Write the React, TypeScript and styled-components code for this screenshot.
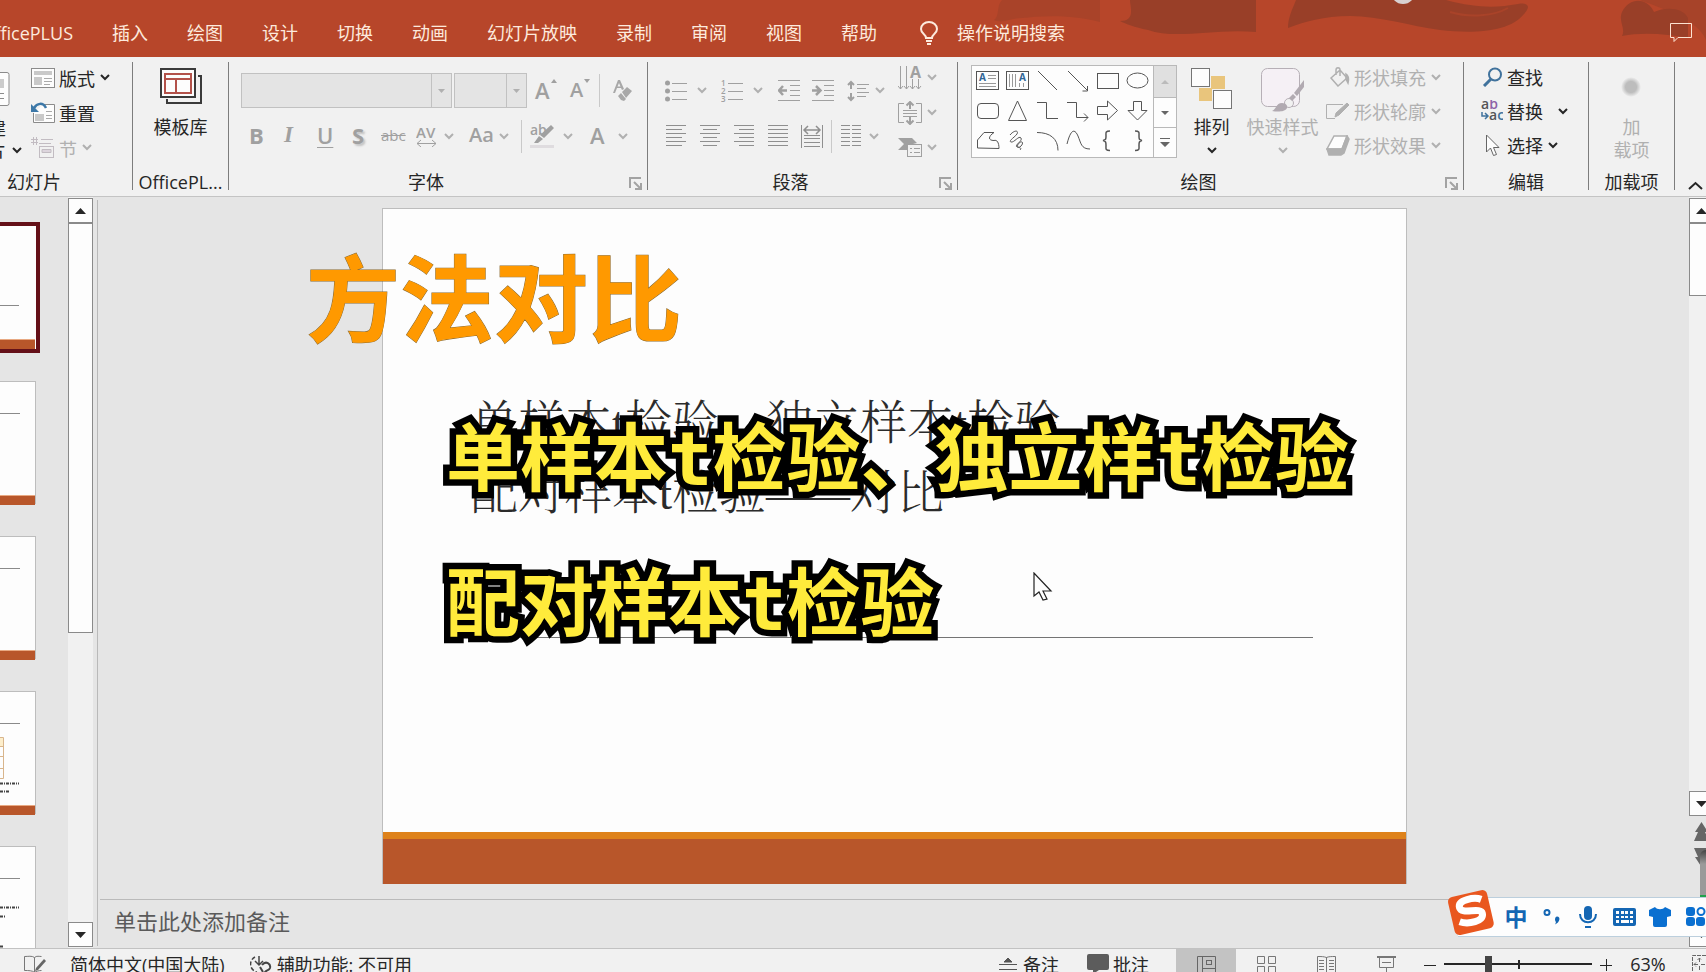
import React from "react";
import styled, { createGlobalStyle, css } from "styled-components";

const GlobalStyle = createGlobalStyle`
  *, *::before, *::after { box-sizing: border-box; }
  html, body, #root { height: 100%; margin: 0; }
  body {
    overflow: hidden;
    background: #e5e5e5;
    font-family: "Open Sans", "Noto Sans CJK SC", sans-serif;
    font-size: 18px;
    color: #262626;
  }
  button, select, textarea, input { font: inherit; color: inherit; margin: 0; }
  button { border: 0; padding: 0; background: none; }
`;

const ink = "#262626";
const faded = "#b0b0b0";
const grey = "#a0a0a0";

const Window = styled.div`
  height: 100vh;
  display: grid;
  grid-template-rows: 57px 140px minmax(0, 1fr) 24px;
  grid-template-columns: minmax(0, 1fr);
  position: relative;
  overflow: hidden;
`;

/* ---------- title bar ---------- */
const TitleBar = styled.header`
  position: relative;
  display: flex;
  align-items: center;
  padding-top: 9px;
  background: #b7462a;
  color: #fdeadd;
  overflow: hidden;
`;
const Waves = styled.svg`
  position: absolute;
  top: 0;
  right: 0;
`;
const Tabs = styled.nav`
  position: relative;
  display: flex;
  align-items: center;
  gap: 39px;
  white-space: nowrap;
`;
const Tab = styled.button`
  line-height: 24px;
`;
const CutTab = styled(Tab)`
  width: 73px;
  display: flex;
  justify-content: flex-end;
  overflow: hidden;
`;
const TellMe = styled(Tab)`
  display: flex;
  align-items: center;
  gap: 19px;
  margin-left: 4px;
`;
const CommentButton = styled.button`
  position: relative;
  margin-left: auto;
  padding-right: 14px;
  display: flex;
`;

/* ---------- ribbon ---------- */
const Ribbon = styled.section`
  display: flex;
  padding: 5px 0 6px;
  background: #f1f1f1;
  border-bottom: 1px solid #c4c4c4;
  overflow: hidden;
`;
const Group = styled.div<{ $w: number }>`
  flex: none;
  width: ${(p) => p.$w}px;
  display: flex;
  flex-direction: column;
  border-right: 1px solid #7d7d7d;
`;
const GroupBody = styled.div`
  flex: 1;
  display: flex;
  min-height: 0;
`;
const GroupFoot = styled.div<{ $start?: boolean }>`
  height: 17px;
  display: flex;
  align-items: center;
  line-height: 18px;
  white-space: nowrap;
  padding-left: ${(p) => (p.$start ? 7 : 0)}px;
`;
const GroupLabel = styled.span<{ $start?: boolean }>`
  flex: 1;
  text-align: ${(p) => (p.$start ? "left" : "center")};
`;
const Launcher = styled.button`
  width: 24px;
  height: 17px;
  display: flex;
  align-items: flex-end;
  justify-content: center;
`;
const Stack = styled.div<{ $row: number; $left?: number }>`
  display: grid;
  grid-auto-rows: ${(p) => p.$row}px;
  align-content: start;
  margin-top: -2px;
  padding-left: ${(p) => p.$left ?? 0}px;
`;
const Item = styled.button<{ $off?: boolean; $gap?: number }>`
  display: flex;
  align-items: center;
  justify-content: flex-start;
  gap: ${(p) => p.$gap ?? 4}px;
  white-space: nowrap;
  color: ${(p) => (p.$off ? faded : ink)};
`;
const ItemText = styled.span<{ $after?: number }>`
  margin-right: ${(p) => p.$after ?? 0}px;
`;
const BigButton = styled.button<{ $off?: boolean; $w: number }>`
  width: ${(p) => p.$w}px;
  display: flex;
  flex-direction: column;
  align-items: center;
  padding-top: 6px;
  line-height: 23px;
  white-space: nowrap;
  color: ${(p) => (p.$off ? faded : ink)};
`;
const BigIcon = styled.span`
  height: 48px;
  display: flex;
  align-items: flex-start;
`;
const BigChevron = styled.span`
  height: 22px;
  display: flex;
  align-items: center;
`;
const CutNew = styled.button`
  width: 31px;
  display: flex;
  flex-direction: column;
  align-items: flex-start;
  padding-top: 10px;
  line-height: 22px;
  overflow: hidden;
`;
const CutIcon = styled.span`
  height: 45px;
`;
const CutText = styled.span`
  display: flex;
  align-items: center;
  gap: 6px;
`;
const CutGlyph = styled.span`
  width: 6px;
  display: flex;
  justify-content: flex-end;
  overflow: hidden;
`;

const Rows = styled.div<{ $w?: number }>`
  display: grid;
  grid-template-rows: 35px 34px;
  row-gap: 11px;
  padding-top: 11px;
  align-content: start;
  width: ${(p) => (p.$w ? p.$w + "px" : "auto")};
`;
const Row = styled.div<{ $left: number }>`
  display: flex;
  align-items: center;
  padding-left: ${(p) => p.$left}px;
`;
const Tool = styled.button<{ $w: number; $gap?: number }>`
  flex: none;
  width: ${(p) => p.$w}px;
  height: 32px;
  display: flex;
  align-items: center;
  gap: ${(p) => p.$gap ?? 7}px;
  color: ${grey};
`;
const Rule = styled.span<{ $after: number }>`
  width: 1px;
  height: 33px;
  background: #c9c9c9;
  margin-right: ${(p) => p.$after}px;
`;
const Combo = styled.span<{ $w: number; $after: number }>`
  flex: none;
  display: flex;
  width: ${(p) => p.$w}px;
  height: 35px;
  margin-right: ${(p) => p.$after}px;
  background: #e4e4e4;
  border: 1px solid #c1c1c1;
`;
const ComboSelect = styled.select`
  flex: 1;
  min-width: 0;
  appearance: none;
  border: 0;
  background: none;
`;
const ComboArrow = styled.span`
  width: 20px;
  display: flex;
  align-items: center;
  justify-content: center;
  border-left: 1px solid #c1c1c1;
`;
const Letter = styled.span<{ $kind: "bold" | "italic" | "under" | "shadow" | "strike" | "case" | "big" | "small" }>`
  line-height: 26px;
  font-size: 22px;
  padding-bottom: 2px;
  ${(p) => p.$kind === "bold" && css`font-weight: 700;`}
  ${(p) => p.$kind === "italic" && css`font: italic 700 23px/26px "Liberation Serif", serif;`}
  ${(p) => p.$kind === "under" && css`font-weight: 600; text-decoration: underline; text-decoration-thickness: 1px; text-underline-offset: 3px;`}
  ${(p) => p.$kind === "shadow" && css`font-weight: 700; text-shadow: 2px 2px 2px #c4c4c4;`}
  ${(p) => p.$kind === "strike" && css`font-size: 15px; text-decoration: line-through;`}
  ${(p) => p.$kind === "case" && css`font-size: 20px; font-weight: 600;`}
  ${(p) => p.$kind === "big" && css`font-weight: 600;`}
  ${(p) => p.$kind === "small" && css`font-size: 20px; font-weight: 600;`}
`;
const SizeMark = styled.span`
  align-self: flex-start;
  display: flex;
  padding-top: 4px;
  margin-left: -6px;
`;

const Gallery = styled.div`
  display: flex;
  width: 206px;
  height: 93px;
  margin: 3px 0 0 13px;
  border: 1px solid #b9b9b9;
  background: #fdfdfd;
`;
const Shapes = styled.div`
  flex: 1;
  display: grid;
  grid-template-columns: repeat(6, 30px);
  grid-template-rows: repeat(3, 30px);
  padding-left: 1px;
`;
const ShapeButton = styled.button`
  display: flex;
  align-items: center;
  justify-content: center;
`;
const GalleryNav = styled.div`
  width: 23px;
  display: grid;
  grid-template-rows: 31px 30px 30px;
  border-left: 1px solid #b9b9b9;
`;
const GalleryArrow = styled.button<{ $off?: boolean }>`
  display: flex;
  align-items: center;
  justify-content: center;
  background: ${(p) => (p.$off ? "#e0e0e0" : "#fdfdfd")};
  & + & { border-top: 1px solid #b9b9b9; }
`;
const Collapse = styled.button`
  flex: 1;
  display: flex;
  align-items: flex-end;
  justify-content: center;
  padding-left: 10px;
`;

/* ---------- workspace ---------- */
const Workspace = styled.main`
  display: grid;
  grid-template-columns: 68px 25px 5px minmax(0, 1fr);
  min-height: 0;
`;
const Thumbs = styled.nav`
  display: flex;
  flex-direction: column;
  align-items: flex-start;
  gap: 32px;
  padding-top: 29px;
  overflow: hidden;
`;
const Thumb = styled.button<{ $active?: boolean }>`
  flex: none;
  width: 36px;
  height: 123px;
  display: flex;
  background: #fdfdfd;
  ${(p) =>
    p.$active
      ? css`outline: 4px solid #641018;`
      : css`border: solid #bdbdbd; border-width: 1px 1px 0 0;`}
`;
const Bar = styled.div`
  display: flex;
  flex-direction: column;
  min-height: 0;
  padding: 1px 0;
  background: #f1f1f1;
  overflow: hidden;
`;
const BarButton = styled.button`
  flex: none;
  width: 25px;
  height: 25px;
  display: flex;
  align-items: center;
  justify-content: center;
  background: #fdfdfd;
  border: 1px solid #8a8a8a;
`;
const BarThumb = styled.div<{ $part: number }>`
  flex: ${(p) => p.$part} 0 0;
  width: 25px;
  background: #fdfdfd;
  border: 1px solid #8a8a8a;
`;
const BarSpace = styled.div<{ $part: number }>`
  flex: ${(p) => p.$part} 0 0;
`;
const Jump = styled.button`
  flex: none;
  width: 25px;
  height: 26px;
  display: flex;
  align-items: center;
  justify-content: center;
`;
const BarTail = styled.div`
  display: flex;
  flex-direction: column;
  padding: 2px 0 28px;
  background: #e5e5e5;
`;
const Splitter = styled.div`
  border-left: 1px solid #b9b9b9;
  margin: 3px 0 2px 4px;
`;
const Editor = styled.section`
  display: grid;
  grid-template-rows: minmax(0, 1fr) 49px;
  min-width: 0;
  min-height: 0;
`;
const StageRow = styled.div`
  display: grid;
  grid-template-columns: minmax(0, 1fr) 17px;
  min-height: 0;
`;
const Stage = styled.div`
  display: flex;
  justify-content: center;
  padding: 11px 0 15px 2px;
  min-height: 0;
`;
const Slide = styled.article`
  position: relative;
  height: 100%;
  aspect-ratio: 1025 / 676;
  display: flex;
  flex-direction: column;
  background: #fdfdfd;
  border: solid #bdbdbd;
  border-width: 1px 1px 0;
`;
const SlideTitle = styled.h1`
  margin: 0;
  padding: 179px 0 0 88px;
  font-family: "Liberation Serif", "Noto Serif CJK SC", "Noto Sans CJK SC", serif;
  font-size: 47px;
  font-weight: 300;
  line-height: 70px;
  color: #2b2b2b;
  white-space: nowrap;
`;
const Dash = styled.span`
  font-size: 42px;
`;
const SlideRule = styled.hr`
  width: auto;
  height: 1px;
  margin: 107px 93px 0 101px;
  border: 0;
  background: #747474;
`;
const Band = styled.div`
  margin-top: auto;
  height: 52px;
  background: #b8562a;
  border-top: 7px solid #de821b;
`;
const Headline = styled.p`
  position: absolute;
  left: -77px;
  top: 38px;
  margin: 0;
  font: 700 94px/94px "Noto Sans CJK SC", sans-serif;
  color: #ff9900;
  -webkit-text-stroke: 1px #8a6a30;
  paint-order: stroke fill;
  white-space: nowrap;
`;
const Caption = styled.p`
  position: absolute;
  left: 63px;
  top: 178px;
  margin: 0;
  font: 700 74px/145px "DejaVu Sans Mono", "Noto Sans CJK SC", sans-serif;
  color: #ffeb3b;
  -webkit-text-stroke: 13px #000;
  paint-order: stroke fill;
  white-space: nowrap;
`;
const Pointer = styled.svg`
  position: absolute;
  left: 650px;
  top: 363px;
`;
const Notes = styled.label`
  display: grid;
  grid-template-columns: minmax(0, 1fr) 17px;
  margin-left: 2px;
  border-top: 1px solid #bababa;
`;
const NotesBox = styled.textarea`
  height: 46px;
  padding: 5px 0 0 14px;
  border: 0;
  outline: 0;
  resize: none;
  background: none;
  font-size: 22px;
  line-height: 32px;
  &::placeholder { color: #5a5a5a; opacity: 1; }
`;
const NotesBar = styled(Bar)`
  justify-content: flex-end;
`;

/* ---------- status bar ---------- */
const Status = styled.footer`
  display: flex;
  height: 24px;
  background: #f1f1f1;
  border-top: 1px solid #c2c2c2;
  overflow: hidden;
  white-space: nowrap;
`;
const StatusItem = styled.button<{ $gap: number; $left: number }>`
  height: 30px;
  flex: none;
  display: flex;
  align-items: center;
  gap: ${(p) => p.$gap}px;
  padding-left: ${(p) => p.$left}px;
`;
const StatusRight = styled.div`
  display: flex;
  margin-left: auto;
`;
const Views = styled.div`
  display: flex;
  margin-left: 27px;
`;
const View = styled.button<{ $on?: boolean }>`
  width: 60px;
  height: 32px;
  display: flex;
  align-items: center;
  justify-content: center;
  background: ${(p) => (p.$on ? "#c3c3c3" : "transparent")};
`;
const Zoom = styled.div`
  height: 30px;
  display: flex;
  align-items: center;
  padding-left: 8px;
`;
const ZoomTrack = styled.label`
  position: relative;
  display: flex;
  margin: 0 8px;
  &::after {
    content: "";
    position: absolute;
    left: 50%;
    top: 4px;
    width: 2px;
    height: 9px;
    background: #262626;
  }
`;
const Range = styled.input`
  appearance: none;
  width: 148px;
  height: 17px;
  background: linear-gradient(#262626, #262626) center / 100% 2px no-repeat;
  &::-webkit-slider-thumb {
    appearance: none;
    width: 7px;
    height: 17px;
    background: #444;
  }
`;
const Percent = styled.button`
  width: 62px;
  margin-left: 5px;
  text-align: center;
`;
const FitButton = styled.button`
  width: 27px;
  display: flex;
  justify-content: flex-end;
  overflow: hidden;
`;

/* ---------- input method bar ---------- */
const ImeBar = styled.aside`
  position: absolute;
  right: 0;
  bottom: 35px;
  width: 248px;
  height: 40px;
  display: flex;
  align-items: center;
  padding-left: 40px;
  background: #fdfdfd;
  border: solid #bccfdd;
  border-width: 1px 0;
  color: #1466b3;
`;
const ImeLogo = styled.svg`
  position: absolute;
  left: -12px;
  top: -9px;
`;
const ImeKey = styled.button`
  flex: none;
  width: 36px;
  height: 30px;
  display: flex;
  align-items: center;
  justify-content: center;
  font-size: 23px;
  font-weight: 700;
  line-height: 28px;
`;
const EdgeWidget = styled.div`
  position: absolute;
  right: 0;
  bottom: 74px;
  width: 6px;
  height: 48px;
  border-radius: 6px 0 0 0;
  background: linear-gradient(#444, #9a9a9a 14px);
  border-bottom: 3px solid #22a24c;
`;

/* ---------- small drawings ---------- */
const Picture = styled.svg`
  flex: none;
`;
type DrawProps = { w: number; h: number; s?: string; sw?: number; f?: string; children: React.ReactNode };
const Draw = ({ w, h, s = "none", sw = 1, f = "none", children }: DrawProps) => (
  <Picture width={w} height={h} viewBox={`0 0 ${w} ${h}`} stroke={s} strokeWidth={sw} fill={f} aria-hidden="true">
    {children}
  </Picture>
);
const Chevron = ({ c = ink }: { c?: string }) => (
  <Draw w={10} h={7} s={c} sw={2}><path d="M1 1l4 4 4-4" /></Draw>
);
const Tri = ({ c = ink, up, w = 11 }: { c?: string; up?: boolean; w?: number }) => (
  <Draw w={w} h={w > 8 ? 6 : 4} f={c}>
    {w > 8
      ? <path d={up ? `M0 6L${w / 2} 0L${w} 6z` : `M0 0L${w / 2} 6L${w} 0z`} />
      : <path d={up ? `M0 4L${w / 2} 0L${w} 4z` : `M0 0L${w / 2} 4L${w} 0z`} />}
  </Draw>
);
const lines = (rows: [number, number, number][]) => rows.map(([y, a, b], i) => <path key={i} d={`M${a} ${y}.5H${b}`} />);

const LayoutIcon = () => (
  <Draw w={24} h={20} s="#8b8b8b">
    <rect x=".5" y=".5" width="23" height="19" fill="#fdfdfd" />
    <path d="M3 3h18v4H3zM3 9h8v8H3z" fill="#c9c9c9" stroke="none" />
    <path d="M13 10.500h8M13 13.500h8M13 16.500h6" stroke="#aaa" />
  </Draw>
);
const ResetIcon = () => (
  <Draw w={24} h={21} s="#8b8b8b">
    <path d="M12 2.500h11.500v18H2.500V11" fill="#fdfdfd" />
    <path d="M4 12h9v7H4z" fill="#c9c9c9" stroke="none" />
    <path d="M15 9.500h6M15 13.500h6M15 16.500h6" stroke="#aaa" />
    <path d="M15 6C12 0 6 1 3 6" stroke="#3d78a8" strokeWidth="2.500" />
    <path d="M0 2v8h8z" fill="#3d78a8" stroke="none" />
  </Draw>
);
const SectionIcon = () => (
  <Draw w={24} h={22} s="#c2bcc2">
    <path d="M0 2.500h7M0 5.500h7M2.500 0v8M5.500 0v8M10 2.500h12M8 6.500h12" />
    <rect x="8.500" y="9.500" width="14" height="11" />
    <path d="M11 12.500h9v3h-9z" fill="#ddd5dd" />
  </Draw>
);
const TemplateIcon = () => (
  <Draw w={42} h={37} s="#3a3a3a" sw={2}>
    <path d="M38 8h3v27H7v-4" />
    <rect x="1" y="1" width="34" height="28" fill="#fdfdfd" />
    <path d="M5 6h26v19H5zM5 11h26M16 11v14" stroke="#b3524a" />
  </Draw>
);
const EraserIcon = () => (
  <Draw w={20} h={24} f="#a8a8a8">
    <path d="M0 14L5 1h2l4 9-2 1-1-2H4l-2 5zM4.500 7.500h3L6 4z" fillRule="evenodd" />
    <path d="M9 13l5-5 5 4-6 7zM8 14l5 6-2 2-3-1-3-4z" />
  </Draw>
);
const SpacingIcon = () => (
  <Draw w={21} h={22} s={grey}>
    <text x="0" y="13" fontSize="15" fontWeight="600" fill={grey} stroke="none">AV</text>
    <path d="M1 18.500h19M5 15l-4 3.500 4 3.500M16 15l4 3.500-4 3.500" />
  </Draw>
);
const HighlightIcon = () => (
  <Draw w={24} h={24} f={grey}>
    <text x="0" y="11" fontSize="14" fontWeight="600">ab</text>
    <path d="M21 1l3 3-10 10-4-3zM9 12l4 3-5 4H4z" />
    <path d="M0 21h24v3H0z" fill="#dfdcdf" />
  </Draw>
);
const BulletsIcon = () => (
  <Draw w={22} h={22} s={grey}>
    {[3, 11, 19].map((y) => <circle key={y} cx="2.500" cy={y} r="2.500" fill={grey} stroke="none" />)}
    <path d="M7 3.500h15M7 11.500h15M7 19.500h15" />
  </Draw>
);
const NumbersIcon = () => (
  <Draw w={22} h={24} s={grey}>
    {[1, 2, 3].map((n) => <text key={n} x="0" y={n * 8 - 1} fontSize="8" fontWeight="600" fill={grey} stroke="none">{n}</text>)}
    <path d="M7 4.500h15M7 12.500h15M7 20.500h15" />
  </Draw>
);
const IndentIcon = ({ flip }: { flip?: boolean }) => (
  <Draw w={22} h={22} s={grey}>
    <path d="M0 .5h22M12 5.500h10M12 10.500h10M12 15.500h10M0 20.500h22" />
    <path d={flip ? "M8 10.500H0M4 6l4.500 4.500L4 15" : "M1 10.500h8M5 6L1 10.500 5 15"} strokeWidth="2.500" />
  </Draw>
);
const LineGapIcon = () => (
  <Draw w={22} h={22} s={grey}>
    <path d="M10 4.500h12M10 8.500h9M10 12.500h12M10 16.500h9" />
    <path d="M4 2v7M1 5l3-3 3 3M4 13v7M1 17l3 3 3-3" strokeWidth="2" />
  </Draw>
);
const AlignIcon = ({ kind }: { kind: "l" | "c" | "r" | "j" }) => {
  const short: [number, number] = kind === "l" ? [0, 16] : kind === "c" ? [3, 17] : kind === "r" ? [5, 20] : [0, 20];
  return (
    <Draw w={21} h={22} s="#8f8f8f">
      {lines([[0, 0, 20], [4, ...short], [8, 0, 20], [12, ...short], [16, 0, 20], [20, ...short]])}
    </Draw>
  );
};
const DistributeIcon = () => (
  <Draw w={22} h={23} s="#8f8f8f">
    <path d="M.5 0v23M21.500 0v23M3 10.500h16M3 13.500h16M3 17.500h16M3 21.500h16" />
    <path d="M3 5h16M7 1L3 5l4 4M15 1l4 4-4 4" strokeWidth="1.500" />
  </Draw>
);
const ColumnsIcon = () => (
  <Draw w={21} h={22} s="#8f8f8f">
    {[0, 4, 8, 12, 16, 20].map((y) => <path key={y} d={`M0 ${y}.5h9M11 ${y}.5h9`} />)}
  </Draw>
);
const DirectionIcon = () => (
  <Draw w={24} h={24} s={grey}>
    <path d="M2.500 0v23M8.500 0v23M14.500 13v10M20.500 13v10" />
    <path d="M0 20l2.500 3L5 20M6 20l2.500 3 2.500-3M12 20l2.500 3 2.500-3M18 20l2.500 3 2.500-3" />
    <text x="12" y="12" fontSize="16" fontWeight="700" fill={grey} stroke="none">A</text>
  </Draw>
);
const VAlignIcon = () => (
  <Draw w={24} h={24} s={grey}>
    <path d="M6 2.500H.5v19H6M18 2.500h5.500v19H18M5 9.500h14M5 12.500h14M5 15.500h14" />
    <path d="M12 1v7M8.500 4.500L12 1l3.500 3.500M12 16v7M8.500 19.500L12 23l3.500-3.500" strokeWidth="2" />
  </Draw>
);
const SmartArtIcon = () => (
  <Draw w={24} h={19} s={grey}>
    <path d="M0 0h14l5 5-4 1H9v6H0l6-6z" fill={grey} stroke="none" />
    <rect x="9.500" y="6.500" width="14" height="12" fill="#f1f1f1" />
    <path d="M12 10.500h2M16 10.500h6M12 14.500h2M16 14.500h6" />
  </Draw>
);
const LaunchIcon = () => (
  <Draw w={13} h={13} s="#a3a3a3" sw={2}>
    <path d="M1 11V1h11M5 5l6 6M12 6v6H6" />
  </Draw>
);

const galleryShapes: [string, React.ReactNode][] = [
  ["文本框", <><rect x=".5" y="1.500" width="22" height="18" /><path d="M12 5.500h8M12 8.500h8M3 13.500h17M3 16.500h17" stroke="#999" /><text x="3" y="11" fontSize="10" fontWeight="700" fill="#2f6697" stroke="none">A</text></>],
  ["竖排文本框", <><rect x=".5" y="1.500" width="22" height="18" /><path d="M3.500 4v13M6.500 4v13M9.500 4v13M13.500 13v4M17.500 13v4" stroke="#999" /><text x="13" y="11" fontSize="10" fontWeight="700" fill="#2f6697" stroke="none">A</text></>],
  ["直线", <path d="M2 1l19 19" />],
  ["箭头", <path d="M2 1l20 20M21.500 16v5h-5" />],
  ["矩形", <rect x="1.500" y="3.500" width="21" height="15" />],
  ["椭圆", <ellipse cx="11.500" cy="10.500" rx="10.500" ry="7.500" />],
  ["圆角矩形", <rect x="1.500" y="3.500" width="21" height="15" rx="3.500" />],
  ["三角形", <path d="M11.500 1l9 19.500h-18z" />],
  ["肘形连接符", <path d="M1 2.500h9.500v16H22" />],
  ["肘形箭头", <path d="M1 2.500h9.500v15H22M18 13.500l4 4-4 4" />],
  ["右箭头", <path d="M1.500 6.500h10V1l10 9.500-10 9.500v-5.500h-10z" />],
  ["下箭头", <path d="M7.500 1.500h8v9h5.500L11.500 20 2 10.500h5.500z" />],
  ["任意多边形", <path d="M1.500 18V10L8 2.500h10c-6 4-6 8 0 8 3-1 5 2 5 8z" />],
  ["曲线", <path d="M4 5c4-5 9-5 7-1-2 3-9 7-6 8s8-7 10-4-7 7-4 9 7-4 5-5-6 4-4 5 4 1 2 3" />],
  ["弧形", <path d="M1 2.500c13 0 21 6 21 18" />],
  ["自由曲线", <path d="M1 14C5-2 9-1 12 6s3 13 12 13" />],
  ["左大括号", <path d="M14 1c-5 0-4 2-4 5 0 3 0 4-3 4.500 3 .5 3 2 3 5 0 3-1 5 4 5" strokeWidth="1.500" />],
  ["右大括号", <path d="M9 1c5 0 4 2 4 5 0 3 0 4 3 4.500-3 .5-3 2-3 5 0 3 1 5-4 5" strokeWidth="1.500" />],
];

const ArrangeIcon = () => (
  <Draw w={41} h={41} s="#757575">
    <path d="M20 8h14v13H20zM8 20h13v13H8z" fill="#e9c57c" stroke="none" />
    <rect x=".5" y=".5" width="18" height="18" fill="#fdfdfd" />
    <rect x="22.500" y="22.500" width="18" height="18" fill="#fdfdfd" />
  </Draw>
);
const StylesIcon = () => (
  <Draw w={44} h={44} s="#b6afb6">
    <rect x=".5" y=".5" width="38" height="38" rx="6" fill="#f5f0f5" />
    <circle cx="28" cy="35" r="4.500" fill="#f1f1f1" />
    <path d="M11 43c4-1 4-8 10-8 4 0 6 3 5 5-2 4-9 4-15 3zM28 30l4-4 3 3-4 4zM33 25l10-13v7l-7 9z" fill="#b1aab1" stroke="none" />
  </Draw>
);
const FillIcon = () => (
  <Draw w={24} h={20} s={faded} sw={1.5}>
    <path d="M5 11l9-8 7 8-9 8zM10 8V3c0-3 4-3 4 0v6" /><path d="M20 7c3 2 3 5 2 9l-2-4z" fill={faded} />
  </Draw>
);
const OutlineIcon = () => (
  <Draw w={24} h={18} s={faded}>
    <path d="M17 2.500H.5v14H9" /><path d="M9 15l1-4L21 1l2 2-10 10z" fill={faded} />
  </Draw>
);
const EffectIcon = () => (
  <Draw w={24} h={21} s={faded} sw={1.5}>
    <path d="M8 1h13l-5 13H1z" fill="#fdfdfd" /><path d="M21 1l2 3-5 14-3 2H3l-2-6h15z" fill={faded} />
  </Draw>
);
const FindIcon = () => (
  <Draw w={22} h={20} s="#40729c" sw={2}><circle cx="14" cy="7.500" r="6" /><path d="M10 12l-7 7" strokeWidth="3" /></Draw>
);
const ReplaceIcon = () => (
  <Draw w={22} h={22}>
    <text x="0" y="9" fontSize="14" fontWeight="600" fill="#555">a<tspan fill="#8d62a8">b</tspan></text>
    <text x="8" y="20" fontSize="14" fontWeight="600" fill="#555">a<tspan fill="#40729c">c</tspan></text>
    <path d="M1 12v4h5M4 13l3 3-3 3" stroke="#40729c" strokeWidth="1.500" />
  </Draw>
);
const SelectIcon = () => (
  <Draw w={22} h={23} s="#666"><path d="M5.500 1v17l4-4 3 7.500 3-1-3-7h5.500z" fill="#fdfdfd" /></Draw>
);
const AddInIcon = () => (
  <Draw w={24} h={40}>
    <defs><radialGradient id="dot"><stop offset="55%" stopColor="#bdbdbd" /><stop offset="100%" stopColor="#f1f1f1" /></radialGradient></defs>
    <circle cx="11" cy="19" r="10" fill="url(#dot)" />
  </Draw>
);

const tabs = ["插入", "绘图", "设计", "切换", "动画", "幻灯片放映", "录制", "审阅", "视图", "帮助"];

const ThumbArt = ({ line, to, extra }: { line: number; to: number; extra?: React.ReactNode }) => (
  <Draw w={35} h={123}>
    <path d={`M0 ${line}.5H${to}`} stroke="#8a8a8a" />
    {extra}
    <path d="M0 113h35v2H0z" fill="#e8a982" />
    <path d="M0 114h35v9H0z" fill="#b8562a" />
  </Draw>
);

export default function App() {
  return (
    <Window>
      <GlobalStyle />
      <TitleBar>
        <Waves width="720" height="57" viewBox="986 0 720 57" aria-hidden="true">
          <path d="M994 20c6-4 2-14 8-20h98v22c-30-8-60-6-78-4-10 0-20 6-28 2z" fill="#a94329" />
          <path d="M1130 0h126v32c-40-4-80 8-108-2-14-3-22-6-28-9 16 0 10-14 10-21z" fill="#993f28" />
          <path d="M1288 28c0-10 4-18 8-28h150c30 8 50 8 72 4 12-2 12 4 6 10-14 18-50 20-84 16-30-4-60-14-90-14-26 0-46 6-62 12z" fill="#993f28" />
          <path d="M1450 12c20 6 44 4 58-4" stroke="#a94329" strokeWidth="2" fill="none" />
          <path d="M1640 0h66v40c-8-20-40-30-66-40z" fill="#a74329" />
          <path d="M1622 36c4-8-4-14 0-24 8-16 26-14 32 0 12-6 30-4 34 6v20c-20-4-46-6-66-2z" fill="#993f28" />
          <circle cx="1403" cy="-8" r="12" fill="#d8d0d0" />
        </Waves>
        <Tabs>
          <CutTab>OfficePLUS</CutTab>
          {tabs.map((t) => <Tab key={t}>{t}</Tab>)}
          <TellMe>
            <Draw w={18} h={24} s="#fdeadd" sw={2}>
              <path d="M6 17c0-4-5-4-5-9a8 7 0 0 1 16 0c0 5-5 5-5 9zM6 20h6M7 23h4" />
            </Draw>
            操作说明搜索
          </TellMe>
        </Tabs>
        <CommentButton aria-label="批注窗格">
          <Draw w={22} h={20} s="#fde3d2"><path d="M.5.500h21v14H8l-4 4v-4H.5z" /></Draw>
        </CommentButton>
      </TitleBar>

      <Ribbon>
        <Group $w={133}>
          <GroupBody>
            <CutNew aria-label="新建幻灯片">
              <CutIcon>
                <Draw w={10} h={34} s="#8b8b8b"><path d="M-2 .5h9a2 2 0 0 1 2 2v29a2 2 0 0 1-2 2h-9" fill="#fdfdfd" /><path d="M0 7h4v9H0z" fill="#ccc" stroke="none" /><path d="M0 21.500h4M0 26.500h4" /></Draw>
              </CutIcon>
              <CutText><CutGlyph>建</CutGlyph></CutText>
              <CutText><CutGlyph>片</CutGlyph><Chevron /></CutText>
            </CutNew>
            <Stack $row={35}>
              <Item><LayoutIcon /><ItemText $after={1}>版式</ItemText><Chevron /></Item>
              <Item><ResetIcon /><ItemText>重置</ItemText></Item>
              <Item $off disabled><SectionIcon /><ItemText $after={1}>节</ItemText><Chevron c={faded} /></Item>
            </Stack>
          </GroupBody>
          <GroupFoot $start><GroupLabel $start>幻灯片</GroupLabel></GroupFoot>
        </Group>

        <Group $w={96}>
          <GroupBody>
            <BigButton $w={95}><BigIcon><TemplateIcon /></BigIcon>模板库</BigButton>
          </GroupBody>
          <GroupFoot><GroupLabel>OfficePL...</GroupLabel></GroupFoot>
        </Group>

        <Group $w={419}>
          <GroupBody>
            <Rows>
              <Row $left={12}>
                <Combo $w={211} $after={2}><ComboSelect disabled aria-label="字体" /><ComboArrow><Tri c="#b0b0b0" w={7} /></ComboArrow></Combo>
                <Combo $w={73} $after={8}><ComboSelect disabled aria-label="字号" /><ComboArrow><Tri c="#b0b0b0" w={7} /></ComboArrow></Combo>
                <Tool $w={35} disabled aria-label="增大字号"><Letter $kind="big">A</Letter><SizeMark><Tri c={grey} up w={6} /></SizeMark></Tool>
                <Tool $w={29} disabled aria-label="减小字号"><Letter $kind="small">A</Letter><SizeMark><Tri c={grey} w={6} /></SizeMark></Tool>
                <Rule $after={13} />
                <Tool $w={20} disabled aria-label="清除格式"><EraserIcon /></Tool>
              </Row>
              <Row $left={20}>
                <Tool $w={35} disabled><Letter $kind="bold">B</Letter></Tool>
                <Tool $w={33} disabled><Letter $kind="italic">I</Letter></Tool>
                <Tool $w={35} disabled><Letter $kind="under">U</Letter></Tool>
                <Tool $w={29} disabled><Letter $kind="shadow">S</Letter></Tool>
                <Tool $w={35} disabled><Letter $kind="strike">abc</Letter></Tool>
                <Tool $w={53} disabled aria-label="字符间距"><SpacingIcon /><Chevron c={faded} /></Tool>
                <Tool $w={52} $gap={5} disabled><Letter $kind="case">Aa</Letter><Chevron c={faded} /></Tool>
                <Rule $after={8} />
                <Tool $w={60} $gap={9} disabled aria-label="突出显示"><HighlightIcon /><Chevron c={faded} /></Tool>
                <Tool $w={50} $gap={13} disabled><Letter $kind="big">A</Letter><Chevron c={faded} /></Tool>
              </Row>
            </Rows>
          </GroupBody>
          <GroupFoot><GroupLabel>字体</GroupLabel><Launcher aria-label="字体设置"><LaunchIcon /></Launcher></GroupFoot>
        </Group>

        <Group $w={310}>
          <GroupBody>
            <Rows $w={250}>
              <Row $left={17}>
                <Tool $w={56} $gap={10} disabled aria-label="项目符号"><BulletsIcon /><Chevron c={faded} /></Tool>
                <Tool $w={57} $gap={10} disabled aria-label="编号"><NumbersIcon /><Chevron c={faded} /></Tool>
                <Tool $w={34} disabled aria-label="减少缩进"><IndentIcon /></Tool>
                <Tool $w={35} disabled aria-label="增加缩进"><IndentIcon flip /></Tool>
                <Tool $w={40} $gap={6} disabled aria-label="行距"><LineGapIcon /><Chevron c={faded} /></Tool>
              </Row>
              <Row $left={18}>
                <Tool $w={34} disabled aria-label="左对齐"><AlignIcon kind="l" /></Tool>
                <Tool $w={34} disabled aria-label="居中"><AlignIcon kind="c" /></Tool>
                <Tool $w={34} disabled aria-label="右对齐"><AlignIcon kind="r" /></Tool>
                <Tool $w={33} disabled aria-label="两端对齐"><AlignIcon kind="j" /></Tool>
                <Tool $w={30} disabled aria-label="分散对齐"><DistributeIcon /></Tool>
                <Rule $after={9} />
                <Tool $w={40} disabled aria-label="分栏"><ColumnsIcon /><Chevron c={faded} /></Tool>
              </Row>
            </Rows>
            <Stack $row={35}>
              <Item $off $gap={5} disabled aria-label="文字方向"><DirectionIcon /><Chevron c={faded} /></Item>
              <Item $off $gap={5} disabled aria-label="对齐文本"><VAlignIcon /><Chevron c={faded} /></Item>
              <Item $off $gap={5} disabled aria-label="转换为图形"><SmartArtIcon /><Chevron c={faded} /></Item>
            </Stack>
          </GroupBody>
          <GroupFoot><GroupLabel>段落</GroupLabel><Launcher aria-label="段落设置"><LaunchIcon /></Launcher></GroupFoot>
        </Group>

        <Group $w={506}>
          <GroupBody>
            <Gallery>
              <Shapes>
                {galleryShapes.map(([name, art]) => (
                  <ShapeButton key={name} aria-label={name}><Draw w={24} h={22} s="#555">{art}</Draw></ShapeButton>
                ))}
              </Shapes>
              <GalleryNav>
                <GalleryArrow $off disabled aria-label="上一行"><Tri c="#bbb" up w={8} /></GalleryArrow>
                <GalleryArrow aria-label="下一行"><Tri c="#666" w={8} /></GalleryArrow>
                <GalleryArrow aria-label="更多形状"><Draw w={10} h={10} f="#666"><path d="M0 0h10v1H0zM0 4h10L5 9z" /></Draw></GalleryArrow>
              </GalleryNav>
            </Gallery>
            <BigButton $w={69}><BigIcon><ArrangeIcon /></BigIcon>排列<BigChevron><Chevron /></BigChevron></BigButton>
            <BigButton $w={73} $off disabled><BigIcon><StylesIcon /></BigIcon>快速样式<BigChevron><Chevron c={faded} /></BigChevron></BigButton>
            <Stack $row={34} $left={7}>
              <Item $off disabled><FillIcon /><ItemText $after={1}>形状填充</ItemText><Chevron c={faded} /></Item>
              <Item $off disabled><OutlineIcon /><ItemText $after={1}>形状轮廓</ItemText><Chevron c={faded} /></Item>
              <Item $off disabled><EffectIcon /><ItemText $after={1}>形状效果</ItemText><Chevron c={faded} /></Item>
            </Stack>
          </GroupBody>
          <GroupFoot><GroupLabel>绘图</GroupLabel><Launcher aria-label="绘图设置"><LaunchIcon /></Launcher></GroupFoot>
        </Group>

        <Group $w={125}>
          <GroupBody>
            <Stack $row={34} $left={17}>
              <Item $gap={4}><FindIcon /><ItemText>查找</ItemText></Item>
              <Item $gap={4}><ReplaceIcon /><ItemText $after={11}>替换</ItemText><Chevron /></Item>
              <Item $gap={4}><SelectIcon /><ItemText $after={1}>选择</ItemText><Chevron /></Item>
            </Stack>
          </GroupBody>
          <GroupFoot><GroupLabel>编辑</GroupLabel></GroupFoot>
        </Group>

        <Group $w={86}>
          <GroupBody>
            <BigButton $w={85} $off disabled>
              <BigIcon><AddInIcon /></BigIcon>
              <span>加<br />载项</span>
            </BigButton>
          </GroupBody>
          <GroupFoot><GroupLabel>加载项</GroupLabel></GroupFoot>
        </Group>
        <Collapse aria-label="折叠功能区"><Draw w={15} h={9} s={ink} sw={2}><path d="M1 8l6.500-6L14 8" /></Draw></Collapse>
      </Ribbon>

      <Workspace>
        <Thumbs>
          <Thumb $active aria-label="幻灯片 1"><ThumbArt line={79} to={19} /></Thumb>
          <Thumb aria-label="幻灯片 2"><ThumbArt line={31} to={20} /></Thumb>
          <Thumb aria-label="幻灯片 3"><ThumbArt line={31} to={20} /></Thumb>
          <Thumb aria-label="幻灯片 4">
            <ThumbArt line={31} to={20} extra={<>
              <path d="M0 46h3v8H0z" fill="#fdeecb" />
              <path d="M0 45.500h3.500v41H0M0 54.500h3M0 64.500h3M0 76.500h3" stroke="#d8b58c" />
              <path d="M0 91.500h19M0 99.500h9" stroke="#444" strokeWidth="2" strokeDasharray="3 1 1 1" />
            </>} />
          </Thumb>
          <Thumb aria-label="幻灯片 5">
            <ThumbArt line={31} to={20} extra={<path d="M0 60.500h19M0 69.500h5M0 99.500h3" stroke="#444" strokeWidth="2" strokeDasharray="3 1 1 1" />} />
          </Thumb>
        </Thumbs>
        <Bar>
          <BarButton aria-label="向上滚动"><Tri up /></BarButton>
          <BarThumb $part={409} />
          <BarSpace $part={290} />
          <BarButton aria-label="向下滚动"><Tri /></BarButton>
        </Bar>
        <Splitter />
        <Editor>
          <StageRow>
            <Stage>
              <Slide>
                <SlideTitle>单样本t检验、独立样本t检验<br />配对样本t检验<Dash>——</Dash>对比</SlideTitle>
                <SlideRule />
                <Band />
                <Headline>方法对比</Headline>
                <Caption>单样本t检验、独立样t检验<br />配对样本t检验</Caption>
                <Pointer width="20" height="29" viewBox="0 0 20 29" fill="#fdfdfd" stroke="#222" strokeWidth="1.200" aria-hidden="true">
                  <path d="M1 1v23l5-4 4 8 4-1-4-8h8z" />
                </Pointer>
              </Slide>
            </Stage>
            <Bar>
              <BarButton aria-label="向上滚动"><Tri up /></BarButton>
              <BarThumb $part={71} />
              <BarSpace $part={499} />
              <BarButton aria-label="向下滚动"><Tri /></BarButton>
              <BarTail>
                <Jump aria-label="上一张幻灯片"><Draw w={15} h={19} f="#666"><path d="M7.500 0L14 10h-3l4 9H0l4-9H1z" /></Draw></Jump>
                <Jump aria-label="下一张幻灯片"><Draw w={15} h={19} f="#666"><path d="M7.500 19L14 9h-3l4-9H0l4 9H1z" /></Draw></Jump>
              </BarTail>
            </Bar>
          </StageRow>
          <Notes>
            <NotesBox aria-label="备注" placeholder="单击此处添加备注" />
            <NotesBar><BarButton aria-label="备注向下滚动"><Tri /></BarButton></NotesBar>
          </Notes>
        </Editor>
      </Workspace>

      <Status>
        <StatusItem $left={24} $gap={0} aria-label="拼写检查">
          <Draw w={22} h={18} s="#777"><path d="M10.500 2.500C8 .5 4 1.500.5 1.500v14c4 0 8 0 10 2 1-1 4-2 7-2M10.500 2.500v15M10.500 2.500c2-2 5-1 7-1" /><path d="M20 4l2 2-8 9-3 1 1-3z" fill="#666" stroke="none" /></Draw>
        </StatusItem>
        <StatusItem $left={24} $gap={0}>简体中文(中国大陆)</StatusItem>
        <StatusItem $left={25} $gap={5}>
          <Draw w={22} h={20} s="#444" sw={2}>
            <path d="M9 2v8M5 7l4 4 4-4" strokeWidth="1.500" /><path d="M5 3a8 8 0 0 0 2 15" strokeDasharray="4 2" strokeWidth="1.500" /><path d="M12 11c4-5 9-1 8 3-1 3-5 2-6 6M10 13l3 5" />
          </Draw>
          辅助功能: 不可用
        </StatusItem>
        <StatusRight>
          <StatusItem $left={0} $gap={6}><Draw w={18} h={14} s="#555"><path d="M0 7.500h18M0 12.500h18" /><path d="M5 5l4-4 4 4z" fill="#555" /></Draw>备注</StatusItem>
          <StatusItem $left={28} $gap={4}><Draw w={22} h={20} f="#5c5c5c"><path d="M2 0h18a2 2 0 0 1 2 2v12a2 2 0 0 1-2 2h-8l-6 4v-4H2a2 2 0 0 1-2-2V2a2 2 0 0 1 2-2z" /></Draw>批注</StatusItem>
          <Views>
            <View $on aria-label="普通视图"><Draw w={19} h={18} s="#666"><path d="M.5.500h18v17H.5zM5.500.500v17M5.500 12.500h13" /><rect x="9.500" y="4.500" width="5" height="4" /></Draw></View>
            <View aria-label="幻灯片浏览"><Draw w={19} h={18} s="#777"><path d="M.5.500h7v7h-7zM11.500.500h7v7h-7zM.5 10.500h7v7h-7zM11.500 10.500h7v7h-7z" /></Draw></View>
            <View aria-label="阅读视图"><Draw w={19} h={18} s="#777"><path d="M9.500 1.500C7 .5 4 .5.5.500v16c4 0 7 0 9 1 2-1 5-1 9-1V.5c-4 0-7 0-9 1zM9.500 1v16M2 4.500h5M2 7.500h5M2 10.500h5M2 13.500h5M12 4.500h5M12 7.500h5M12 10.500h5M12 13.500h5" /></Draw></View>
            <View aria-label="幻灯片放映"><Draw w={19} h={18} s="#777"><path d="M0 1h19" strokeWidth="2" /><path d="M2.500 2v9.500h14V2M5 6.500h9M9.500 12v5M5 17.500h9" /></Draw></View>
          </Views>
          <Zoom>
            <button aria-label="缩小"><Draw w={12} h={12} s={ink}><path d="M0 6.500h12" /></Draw></button>
            <ZoomTrack><Range type="range" min={0} max={100} defaultValue={29} aria-label="缩放" /></ZoomTrack>
            <button aria-label="放大"><Draw w={12} h={12} s={ink}><path d="M0 6.500h12M6.500 0v12" /></Draw></button>
            <Percent>63%</Percent>
            <FitButton aria-label="适应窗口"><Draw w={14} h={18} s="#666"><path d="M14 .5H.5v17H14M7.500 3v4M7.500 11v4M2 9.500h4M9 9.500h4M5.500 5l2-2 2 2M4 7.500l-2 2 2 2" strokeDasharray="4 1" /></Draw></FitButton>
          </Zoom>
        </StatusRight>
      </Status>

      <EdgeWidget />
      <ImeBar>
        <ImeLogo width="50" height="48" viewBox="0 0 50 48" aria-hidden="true">
          <g transform="rotate(-13 25 24)">
            <rect x="5" y="4" width="40" height="39" rx="5" fill="#e9571f" />
            <path d="M38 13c-6-4-23-5-23 3 0 8 21 4 21 11 0 8-16 8-24 3" fill="none" stroke="#fff" strokeWidth="7" />
          </g>
        </ImeLogo>
        <ImeKey>中</ImeKey>
        <ImeKey aria-label="标点"><Draw w={18} h={18} s="#1466b3" sw={2}><circle cx="4" cy="4.500" r="2.500" /><path d="M14 8.500c4 0 3 6-2 8 2-3 0-3 0-5 0-2 1-3 2-3z" fill="#1466b3" stroke="none" /></Draw></ImeKey>
        <ImeKey aria-label="语音"><Draw w={18} h={24} s="#1466b3" sw={2}><rect x="5" y="1" width="8" height="14" rx="4" fill="#1466b3" stroke="none" /><path d="M1 9c0 11 16 11 16 0" /><path d="M6 22h6" /></Draw></ImeKey>
        <ImeKey aria-label="软键盘"><Draw w={23} h={18} f="#1466b3"><rect width="23" height="18" rx="2" /><path d="M3 3h3v3H3zM8 3h3v3H8zM12 3h3v3h-3zM17 3h3v3h-3zM3 8h3v2H3zM8 8h3v2H8zM12 8h3v2h-3zM17 8h3v2h-3zM3 12h3v3H3zM8 12h8v3H8zM17 12h3v3h-3z" fill="#fdfdfd" /></Draw></ImeKey>
        <ImeKey aria-label="皮肤"><Draw w={22} h={20} f="#0a6fd0"><path d="M6 0c2 3 8 3 10 0l6 3v6l-4 1v8q0 2-2 2H6q-2 0-2-2v-8L0 9V3z" /></Draw></ImeKey>
        <ImeKey aria-label="工具箱"><Draw w={20} h={20} f="#0a6fd0"><rect width="9" height="9" rx="3" /><rect y="10" width="9" height="9" rx="3" /><rect x="10" y="10" width="9" height="9" rx="3" /><circle cx="15" cy="4.500" r="3.500" fill="none" stroke="#0a6fd0" strokeWidth="2" /></Draw></ImeKey>
      </ImeBar>
    </Window>
  );
}
